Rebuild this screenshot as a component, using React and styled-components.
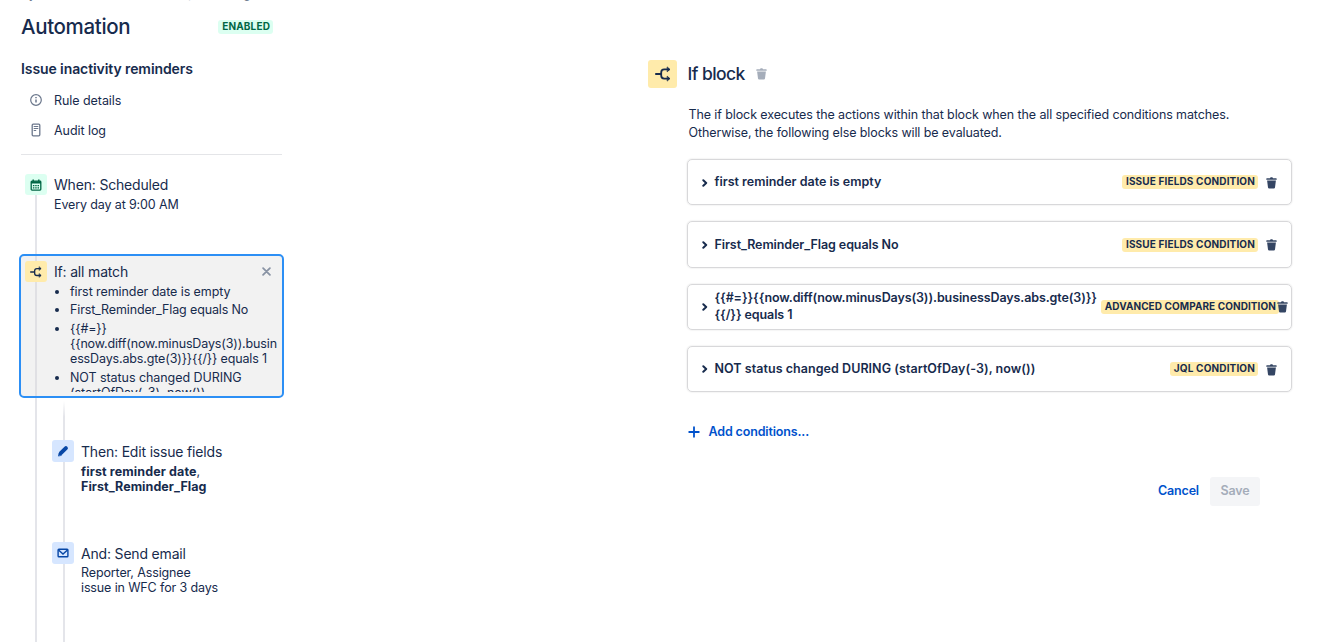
import React from 'react';
import styled, { createGlobalStyle } from 'styled-components';

const GlobalStyle = createGlobalStyle`
  * {
    box-sizing: border-box;
  }
  body {
    margin: 0;
    background: #fff;
    color: #172b4d;
    font-family: Inter, "Liberation Sans", sans-serif;
    overflow: hidden;
  }
`

const Page = styled.div`
  display: flex;
  width: 1320px;
  height: 642px;
  overflow: hidden;
`

const Sidebar = styled.aside`
  display: flex;
  flex-direction: column;
  width: 284px;
  flex-shrink: 0;
  padding-left: 19px;
`

const Breadcrumbs = styled.div`
  height: 4px;
  padding-left: 2px;
  display: flex;
  align-items: flex-end;
  font-size: 12px;
  line-height: 18px;
  white-space: pre;
  color: #6b778c;
  span {
    margin-bottom: 1px;
  }
`

const TitleRow = styled.div`
  display: flex;
  align-items: center;
  justify-content: space-between;
  height: 46px;
  padding: 0 11px 0 2px;
`

const Title = styled.h1`
  margin: 0 0 2px;
  font-size: 20.5px;
  font-weight: 500;
  letter-spacing: -0.35px;
`

const Lozenge = styled.span`
  flex-shrink: 0;
  padding: 0 3px 0 4px;
  height: 14px;
  margin-top: 0.2px;
  border-radius: 3px;
  font-size: 10px;
  line-height: 13px;
  font-weight: 700;
  letter-spacing: ${props => props.$tight ? 0.08 : 0.15}px;
  text-transform: uppercase;
  white-space: nowrap;
  background: ${props => props.$success ? '#dcfff1' : '#ffebab'};
  color: ${props => props.$success ? '#006644' : '#172b4d'};
`

const RuleName = styled.h2`
  margin: 9px 0 6px;
  padding-left: 2px;
  font-size: 14px;
  line-height: 20px;
  font-weight: 600;
  letter-spacing: -0.09px;
`

const NavItem = styled.a`
  display: flex;
  align-items: center;
  height: 30px;
  padding-left: 11px;
  gap: 12px;
  font-size: 12.5px;
  letter-spacing: -0.06px;
  svg {
    color: #6b778c;
  }
`

const Divider = styled.hr`
  margin: 9px 0 0 2px;
  width: 261px;
  border: 0;
  border-top: 1px solid #e4e5e8;
`

const Flow = styled.div`
  display: flex;
  flex-direction: column;
  flex: 1;
  position: relative;
  padding-top: 19px;
`

const Rail = styled.div`
  position: absolute;
  left: ${props => props.$left}px;
  top: ${props => props.$top}px;
  bottom: 0;
  width: 2px;
  background: ${props => props.$fade ? 'linear-gradient(rgba(228, 229, 234, 0), #e4e5ea 16px)' : '#e4e5ea'};
`

const Step = styled.div`
  display: flex;
  gap: 7px;
  height: ${props => props.$height}px;
  padding-left: ${props => props.$nested ? 33 : 6}px;
  position: relative;
`

const Branch = styled.div`
  padding-top: 42px;
`

const Selected = styled.div`
  display: flex;
  gap: 7px;
  width: 265px;
  height: 144px;
  padding: 5px 4px;
  border: 2px solid #2c8ff5;
  border-radius: 5px;
  background: linear-gradient(to right, transparent 14px, #e0e0e4 14px, #e0e0e4 16px, transparent 16px), #f2f2f2;
  position: relative;
`

const IconTile = styled.div`
  display: flex;
  align-items: center;
  justify-content: center;
  flex-shrink: 0;
  width: ${props => props.$size || 22}px;
  height: ${props => props.$height || 21}px;
  border-radius: 3px;
  background: ${props => props.$bg};
  color: ${props => props.$color};
`

const StepBody = styled.div`
  flex: 1;
  min-width: 0;
`

const StepTitle = styled.div`
  display: flex;
  align-items: center;
  justify-content: space-between;
  height: ${props => props.$height || 24}px;
  font-size: 14px;
  line-height: 18px;
  letter-spacing: -0.18px;
  svg {
    margin-right: 7px;
    color: #8993a4;
  }
`

const StepText = styled.div`
  margin-top: ${props => props.$gap || 0}px;
  font-size: 12.5px;
  line-height: 15px;
  letter-spacing: -0.13px;
  b {
    letter-spacing: 0.05px;
  }
  b:first-child {
    letter-spacing: 0.12px;
  }
`

const ConditionList = styled.ul`
  height: 110px;
  margin: 0;
  padding: 2px 0 0 16px;
  overflow: hidden;
  font-size: 12.5px;
  line-height: 15px;
  letter-spacing: -0.14px;
  li {
    width: 212px;
    margin-bottom: 3.6px;
    white-space: pre-line;
  }
  li:first-child {
    margin-bottom: 3.2px;
    letter-spacing: -0.08px;
  }
  li:nth-child(3) {
    margin-bottom: 4.2px;
  }
  li:last-child {
    letter-spacing: -0.06px;
  }
`

const Editor = styled.main`
  margin-left: 364px;
  padding-top: 60px;
  width: 645px;
`

const EditorHeader = styled.div`
  display: flex;
  align-items: center;
  height: 28px;
  h2 {
    margin: 0 11px 1px 10.5px;
    font-size: 17.5px;
    font-weight: 500;
    letter-spacing: -0.55px;
  }
  > svg {
    color: #a5adba;
  }
`

const EditorContent = styled.div`
  padding-left: 39px;
`

const Description = styled.p`
  margin: 18px 0 17px;
  padding-left: 1.5px;
  font-size: 12.5px;
  line-height: 18px;
  letter-spacing: -0.1px;
  white-space: nowrap;
`

const Conditions = styled.div`
  display: grid;
  grid-template-rows: repeat(4, 46.3px);
  gap: 16px;
`

const ConditionCard = styled.div`
  display: flex;
  align-items: center;
  width: 605px;
  padding-left: 14px;
  padding-right: ${props => props.$tight ? 3 : 14}px;
  border: 1px solid #d8d8da;
  border-radius: 5px;
  box-shadow: 0 0 2px rgba(0, 0, 0, 0.14);
  > svg {
    flex-shrink: 0;
    margin-top: 0.8px;
  }
`

const ConditionName = styled.div`
  flex: 1;
  padding-left: 6.5px;
  margin-bottom: 0.6px;
  font-size: 12.5px;
  line-height: 17px;
  font-weight: 600;
  letter-spacing: ${props => props.$tracking || 0}px;
  white-space: pre;
`

const TrashSlot = styled.span`
  display: flex;
  margin-left: ${props => props.$tight ? -2 : 8}px;
  padding-top: 1px;
  color: #344563;
`

const AddButton = styled.button`
  display: flex;
  align-items: center;
  gap: 8.5px;
  margin-top: 29px;
  padding: 0 0 0 1px;
  height: 20px;
  border: none;
  background: none;
  font: 600 12.5px Inter, sans-serif;
  letter-spacing: -0.15px;
  color: #0052cc;
  svg {
    margin-top: 1px;
  }
`

const Actions = styled.div`
  display: flex;
  justify-content: flex-end;
  margin-top: 36px;
  padding-right: 33px;
`

const Button = styled.button`
  height: 29px;
  width: ${props => props.$width}px;
  padding: 0 0 2px;
  border: none;
  border-radius: 3px;
  font: 600 12.5px Inter, sans-serif;
  letter-spacing: -0.2px;
  color: ${props => props.disabled ? '#a5adba' : '#0052cc'};
  background: ${props => props.disabled ? '#f4f5f7' : 'none'};
`

const InfoIcon = () => (
  <svg width="12" height="12" viewBox="0 0 12 12" fill="none" stroke="currentColor">
    <circle cx="6" cy="6" r="5.3" strokeWidth="1.2" />
    <path d="M6 5.4v3.1M6 3v1.3" strokeWidth="1.5" />
  </svg>
)

const LogIcon = () => (
  <svg width="12" height="14" viewBox="0 0 12 14" fill="none" stroke="currentColor">
    <rect x="2.2" y="1.2" width="7.6" height="11.6" rx="1" strokeWidth="1.3" />
    <path d="M3.7 3.5h4.6M3.7 5.5h4.6M3.7 7.5h2.5" strokeWidth="1.1" />
  </svg>
)

const CalendarIcon = () => (
  <svg width="12" height="12" viewBox="0 0 12 12" fill="none" stroke="currentColor">
    <rect x="1.2" y="2.2" width="9.6" height="8.9" rx="0.8" strokeWidth="1.3" />
    <path d="M1 3.4h10" strokeWidth="2.2" />
    <path d="M3.2 0.6v2M8.8 0.6v2" strokeWidth="1.4" />
    <path d="M2.9 6.6h6.4M2.9 8.8h6.4" strokeWidth="1.3" strokeDasharray="1.5 0.8" />
  </svg>
)

const BranchIcon = ({ size = 12 }) => (
  <svg width={size} height={size} viewBox="0 0 16 16" fill="none" stroke="currentColor" strokeWidth="1.8" strokeLinecap="round" strokeLinejoin="round">
    <path d="M0.9 8h5.3M14 3.4H9.2Q6.2 3.4 6.2 6.4V9.6Q6.2 12.6 9.2 12.6H14" />
    <path d="M12.5 1.2l2.3 2.2-2.3 2.2zM12.5 10.4l2.3 2.2-2.3 2.2z" fill="currentColor" strokeWidth="0.8" />
  </svg>
)

const PencilIcon = () => (
  <svg width="12" height="12" viewBox="0 0 12 12" fill="none" stroke="currentColor" strokeLinecap="round">
    <path d="M3.8 8.2L8.9 3.1" strokeWidth="4" />
    <path d="M1.5 10.7l.6-2.6 2 2z" fill="currentColor" strokeWidth="0.7" />
  </svg>
)

const MailIcon = () => (
  <svg width="12" height="10" viewBox="0 0 12 10" fill="none" stroke="currentColor" strokeWidth="1.4">
    <rect x="1.1" y="1.2" width="9.8" height="7.6" rx="0.8" />
    <path d="M1.5 1.9L6 6l4.5-4.1" />
  </svg>
)

const TrashIcon = () => (
  <svg width="11" height="12" viewBox="0 0 11 12" fill="currentColor">
    <path d="M0.9 1.2H4Q4.2.3 5 .3h1Q6.8.3 7 1.2h3.1q.6 0 .6.6v.9H.3v-.9q0-.6.6-.6zM1.1 3.5h8.8L9 10.4q-.1 1.1-1.2 1.1H3.2Q2.1 11.5 2 10.4z" />
  </svg>
)

const ChevronIcon = () => (
  <svg width="6" height="8" viewBox="0 0 6 8" fill="none" stroke="currentColor" strokeWidth="2" strokeLinecap="round" strokeLinejoin="round">
    <path d="M1.3 1.3L4.2 4 1.3 6.7" />
  </svg>
)

const CrossIcon = () => (
  <svg width="9" height="9" viewBox="0 0 9 9" fill="none" stroke="currentColor" strokeWidth="1.8" strokeLinecap="round">
    <path d="M1.1 1.1l6.8 6.8M7.9 1.1L1.1 7.9" />
  </svg>
)

const PlusIcon = () => (
  <svg width="12" height="12" viewBox="0 0 12 12" fill="none" stroke="currentColor" strokeWidth="1.8" strokeLinecap="round">
    <path d="M6 1.2v9.6M1.2 6h9.6" />
  </svg>
)

const conditions = [
  { name: 'first reminder date is empty', type: 'Issue fields condition' },
  { name: 'First_Reminder_Flag equals No', type: 'Issue fields condition', tracking: -0.08 },
  {
    name: '{{#=}}{{now.diff(now.minusDays(3)).businessDays.abs.gte(3)}}\n{{/}} equals 1',
    type: 'Advanced compare condition',
    tracking: -0.1,
    tight: true,
  },
  { name: 'NOT status changed DURING (startOfDay(-3), now())', type: 'JQL condition', tracking: 0.05 },
]

const App = () => (
  <Page>
    <GlobalStyle />
    <Sidebar>
      <Breadcrumbs><span>System  /  Automation  /  Jira processing  /</span></Breadcrumbs>
      <TitleRow>
        <Title>Automation</Title>
        <Lozenge $success>Enabled</Lozenge>
      </TitleRow>
      <RuleName>Issue inactivity reminders</RuleName>
      <NavItem><InfoIcon />Rule details</NavItem>
      <NavItem><LogIcon />Audit log</NavItem>
      <Divider />
      <Flow>
        <Rail $left={16} $top={30} />
        <Rail $left={44} $top={246} $fade />
        <Step $height={80}>
          <IconTile $bg="#dcfff1" $color="#006644"><CalendarIcon /></IconTile>
          <StepBody>
            <StepTitle $height={21}>When: Scheduled</StepTitle>
            <StepText $gap={2}>Every day at 9:00 AM</StepText>
          </StepBody>
        </Step>
        <Selected>
          <IconTile $bg="#ffebab" $color="#172b4d"><BranchIcon /></IconTile>
          <StepBody>
            <StepTitle $height={21}>If: all match<CrossIcon /></StepTitle>
            <ConditionList>
              <li>first reminder date is empty</li>
              <li>First_Reminder_Flag equals No</li>
              <li>{'{{#=}}\n{{now.diff(now.minusDays(3)).busin\nessDays.abs.gte(3)}}{{/}} equals 1'}</li>
              <li>{'NOT status changed DURING\n(startOfDay(-3), now())'}</li>
            </ConditionList>
          </StepBody>
        </Selected>
        <Branch>
          <Step $nested $height={102}>
            <IconTile $height={22} $bg="#d6e6ff" $color="#0747a6"><PencilIcon /></IconTile>
            <StepBody>
              <StepTitle>Then: Edit issue fields</StepTitle>
              <StepText><b>first reminder date</b>,<br /><b>First_Reminder_Flag</b></StepText>
            </StepBody>
          </Step>
          <Step $nested $height={100}>
            <IconTile $height={22} $bg="#d6e6ff" $color="#0747a6"><MailIcon /></IconTile>
            <StepBody>
              <StepTitle>And: Send email</StepTitle>
              <StepText $gap={-1}>Reporter, Assignee<br />issue in WFC for 3 days</StepText>
            </StepBody>
          </Step>
        </Branch>
      </Flow>
    </Sidebar>
    <Editor>
      <EditorHeader>
        <IconTile $size={29} $height={28} $bg="#ffebab" $color="#172b4d"><BranchIcon size={16} /></IconTile>
        <h2>If block</h2>
        <TrashIcon />
      </EditorHeader>
      <EditorContent>
        <Description>
          The if block executes the actions within that block when the all specified conditions matches.<br />
          Otherwise, the following else blocks will be evaluated.
        </Description>
        <Conditions>
          {conditions.map(({ name, type, tracking, tight }) => (
            <ConditionCard key={name} $tight={tight}>
              <ChevronIcon />
              <ConditionName $tracking={tracking}>{name}</ConditionName>
              <Lozenge $tight={tight}>{type}</Lozenge>
              <TrashSlot $tight={tight}><TrashIcon /></TrashSlot>
            </ConditionCard>
          ))}
        </Conditions>
        <AddButton><PlusIcon />Add conditions...</AddButton>
        <Actions>
          <Button $width={63}>Cancel</Button>
          <Button $width={50} disabled>Save</Button>
        </Actions>
      </EditorContent>
    </Editor>
  </Page>
)

export default App;
